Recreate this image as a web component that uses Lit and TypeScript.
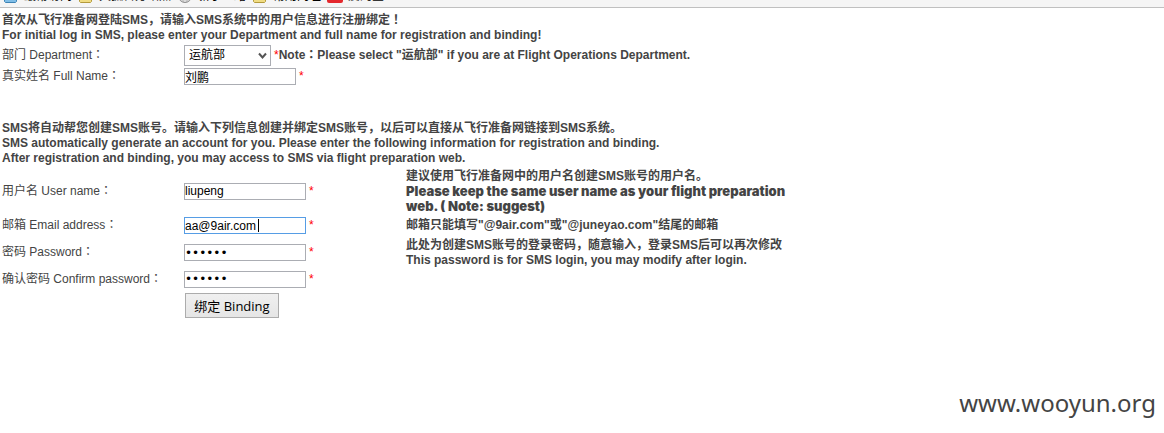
import { LitElement, html, css } from "lit";
import { customElement, property } from "lit/decorators.js";

const icon = (kind: string) => {
  if (kind === "globe") {
    return html`<svg width="16" height="16" viewBox="0 0 16 16"><circle cx="8" cy="8" r="6.500" fill="#c9c9c9" stroke="#8d8d8d"/><path d="M2 8h12M8 2v12M4 4q4 3 8 0M4 12q4-3 8 0" fill="none" stroke="#eee"/></svg>`;
  }
  if (kind === "red") {
    return html`<svg width="16" height="16" viewBox="0 0 16 16"><rect width="16" height="15" rx="2" fill="#e4282d"/></svg>`;
  }
  const [fill, line] = kind === "blue" ? ["#7fbde6", "#3d83b5"] : ["#f0dc83", "#b39a3c"];
  return html`<svg width="16" height="16" viewBox="0 0 16 16"><path d="M1.500 2.500h5l1 2h6v9l-1 1h-10l-1-1z" fill=${fill} stroke=${line}/></svg>`;
};

const bookmarks = [
  { kind: "blue", text: "最常访问" },
  { kind: "folder", text: "火狐官方站点" },
  { kind: "globe", text: "新手上路" },
  { kind: "folder", text: "常用网址" },
  { kind: "red", text: "爱淘宝" },
];

@customElement("bookmark-bar")
export class BookmarkBar extends LitElement {
  static styles = css`
    :host { display: block; }
    .bar {
      box-sizing: border-box;
      display: flex;
      align-items: flex-end;
      gap: 6px;
      height: 8px;
      padding: 0 3px 3px;
      overflow: hidden;
      background: #f5f5f5;
      border-bottom: 1px solid #c0c0c0;
      font: 12px/16px "Liberation Sans", "Noto Sans CJK SC", sans-serif;
    }
    .item { display: flex; flex: none; gap: 5px; color: #000; text-decoration: none; }
    svg { display: block; }
  `;
  render() {
    return html`<nav class="bar">
      ${bookmarks.map((b) => html`<a class="item" href="#">${icon(b.kind)}<span>${b.text}</span></a>`)}
    </nav>`;
  }
}

@customElement("app-root")
export class AppRoot extends LitElement {
  @property() email = "aa@9air.com";

  static styles = css`
    :host {
      display: block;
      background: #fff;
      color: #444;
      font: 12px/15px "Liberation Sans", "Noto Sans CJK SC", sans-serif;
    }
    p { margin: 0; }
    .mid { font-family: "Noto Sans CJK TC", sans-serif; line-height: 1; }
    .intro { padding: 5px 2px 0; font-weight: bold; }
    .second { padding-top: 35px; }
    .form { display: grid; grid-template-columns: 182px 222px 1fr; padding-left: 2px; align-items: center; }
    .top { grid-template-columns: 182px 1fr; grid-template-rows: 23px 19px; padding-top: 1px; }
    .account { grid-template-rows: 48px 21px 33px 20px 33px; padding-top: 1px; }
    .field { display: flex; align-items: center; gap: 3px; }
    .star { color: #f00; font-weight: normal; }
    .note { font-weight: bold; }
    .narrow { max-width: 400px; }
    .heavy { font: 900 13px/15px Inter, sans-serif; }
    input, select {
      box-sizing: border-box;
      margin: 0;
      border: 1px solid #abadb3;
      border-radius: 0;
      background: #fff;
      color: #000;
      font: 12px/15px "Liberation Sans", "Noto Sans CJK SC", sans-serif;
      outline: none;
    }
    input { width: 122px; height: 17px; padding: 0; }
    input[type="password"] { font-family: "DejaVu Sans", sans-serif; }
    .name { width: 112px; }
    .focus { border-color: #569de5; caret-color: transparent; }
    .pick, .edit { position: relative; display: flex; }
    .caret { position: absolute; left: 74px; top: 2px; width: 1px; height: 13px; background: #000; }
    select { width: 87px; height: 21px; padding: 0 4px; appearance: none; }
    .arrow { position: absolute; right: 4px; top: 7px; pointer-events: none; }
    button {
      grid-column: 2;
      justify-self: start;
      margin: 0 0 0 1px;
      width: 94px;
      height: 25px;
      padding: 0;
      border: 1px solid #acacac;
      border-radius: 0;
      background: linear-gradient(#f0f0f0, #e5e5e5);
      color: #000;
      font: 13px/18px "Open Sans", "Noto Sans CJK SC", sans-serif;
    }
    .mark { display: flex; justify-content: flex-end; padding: 63px 8px 0 0; font: 24px/36px "Noto Sans", sans-serif; }
  `;

  firstUpdated() {
    const box = this.renderRoot.querySelector<HTMLInputElement>("#email");
    box?.focus();
    box?.setSelectionRange(this.email.length, this.email.length);
  }

  render() {
    const colon = html`<span class="mid">：</span>`;
    return html`
      <bookmark-bar></bookmark-bar>
      <main>
        <div class="intro">
          <p>首次从飞行准备网登陆SMS，请输入SMS系统中的用户信息进行注册绑定<span class="mid">！</span></p>
          <p>For initial log in SMS, please enter your Department and full name for registration and binding!</p>
        </div>
        <div class="form top">
          <label for="dept">部门 Department${colon}</label>
          <div class="field">
            <span class="pick">
              <select id="dept"><option>运航部</option></select>
              <svg class="arrow" width="9" height="8" viewBox="0 0 9 8"><path d="M1 1.500L4.500 5.500L8 1.500" fill="none" stroke="#555" stroke-width="2"/></svg>
            </span>
            <span class="note"><span class="star">*</span>Note${colon}Please select "运航部" if you are at Flight Operations Department.</span>
          </div>
          <label for="name">真实姓名 Full Name${colon}</label>
          <div class="field"><input id="name" class="name" .value=${"刘鹏"} /><span class="star">*</span></div>
        </div>
        <div class="intro second">
          <p>SMS将自动帮您创建SMS账号。请输入下列信息创建并绑定SMS账号，以后可以直接从飞行准备网链接到SMS系统。</p>
          <p>SMS automatically generate an account for you. Please enter the following information for registration and binding.</p>
          <p>After registration and binding, you may access to SMS via flight preparation web.</p>
        </div>
        <form class="form account">
          <label for="user">用户名 User name${colon}</label>
          <div class="field"><input id="user" .value=${"liupeng"} /><span class="star">*</span></div>
          <div class="note narrow"><p>建议使用飞行准备网中的用户名创建SMS账号的用户名。</p><p class="heavy">Please keep the same user name as your flight preparation web. ( Note: suggest)</p></div>
          <label for="email">邮箱 Email address${colon}</label>
          <div class="field"><span class="edit"><input id="email" class="focus" .value=${this.email} /><i class="caret"></i></span><span class="star">*</span></div>
          <p class="note">邮箱只能填写"@9air.com"或"@juneyao.com"结尾的邮箱</p>
          <label for="pass">密码 Password${colon}</label>
          <div class="field"><input id="pass" type="password" .value=${"123456"} /><span class="star">*</span></div>
          <div class="note"><p>此处为创建SMS账号的登录密码，随意输入，登录SMS后可以再次修改</p><p>This password is for SMS login, you may modify after login.</p></div>
          <label for="again">确认密码 Confirm password${colon}</label>
          <div class="field"><input id="again" type="password" .value=${"123456"} /><span class="star">*</span></div>
          <button type="button">绑定 Binding</button>
        </form>
      </main>
      <footer class="mark">www.wooyun.org</footer>
    `;
  }
}
